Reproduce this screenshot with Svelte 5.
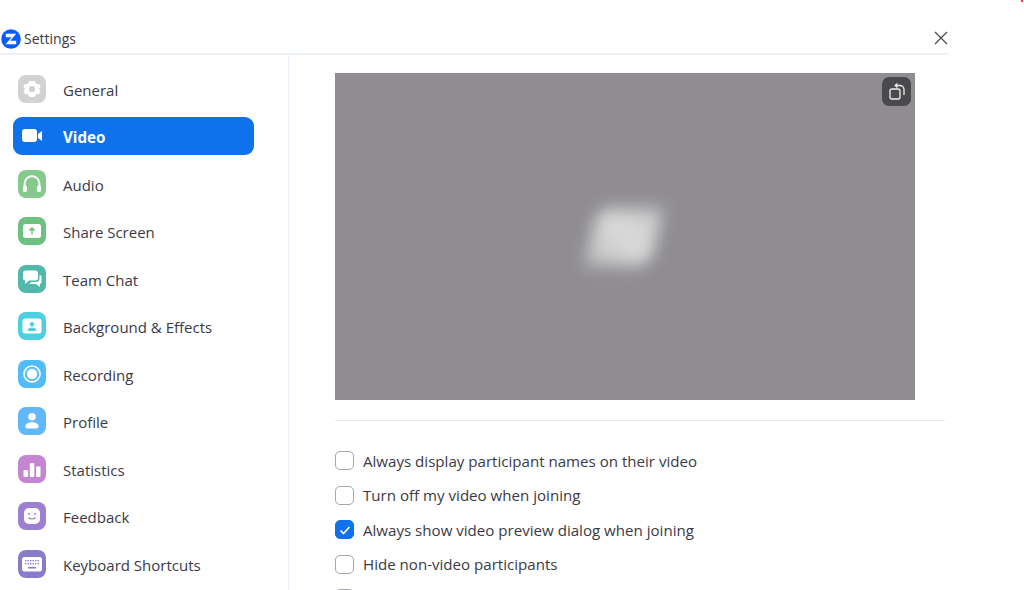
<script>
  const items = [
    { label: 'General', cls: 'general' },
    { label: 'Video', cls: 'video', active: true },
    { label: 'Audio', cls: 'audio' },
    { label: 'Share Screen', cls: 'share' },
    { label: 'Team Chat', cls: 'chat' },
    { label: 'Background & Effects', cls: 'bg' },
    { label: 'Recording', cls: 'rec' },
    { label: 'Profile', cls: 'profile' },
    { label: 'Statistics', cls: 'stats' },
    { label: 'Feedback', cls: 'feedback' },
    { label: 'Keyboard Shortcuts', cls: 'keys' }
  ];
  const options = [
    { label: 'Always display participant names on their video', checked: false },
    { label: 'Turn off my video when joining', checked: false },
    { label: 'Always show video preview dialog when joining', checked: true },
    { label: 'Hide non-video participants', checked: false },
    { label: '', checked: false }
  ];
</script>

<div class="page">
  <span class="speck"></span>
  <header class="titlebar">
    <div class="title">
      <svg class="logo" viewBox="0 0 20 20" width="20" height="20">
        <circle cx="10" cy="10" r="9.8" fill="#0b5cff" />
        <path d="M4.800 4.800h10.400l-6 7h6v3.400H4.600l6-7H4.800z" fill="#fff" />
      </svg>
      <span>Settings</span>
    </div>
    <button class="close" aria-label="Close">
      <svg viewBox="0 0 14 14" width="14" height="14"><path d="M1 1l12 12M13 1L1 13" stroke="#444" stroke-width="1.1" fill="none" /></svg>
    </button>
  </header>

  <div class="body">
    <nav class="sidebar">
      {#each items as item}
        <div class="row" class:active={item.active}>
          {#if item.cls === 'video'}
            <svg class="plain" viewBox="0 0 28 28" width="28" height="28">
              <rect x="4" y="7" width="15" height="13" rx="3" fill="#fff" />
              <path d="M20 12l4-3v10l-4-3z" fill="#fff" />
            </svg>
          {:else}
            <svg class="icon {item.cls}" viewBox="0 0 28 28" width="28" height="28">
              {#if item.cls === 'general'}
                <path fill="#fff" fill-rule="evenodd" d="M11.200 6h5.600l1.300 2.700 3 .2 1.500 2.500L21 14l1.600 2.600-1.500 2.500-3 .2L16.800 22h-5.600l-1.300-2.700-3-.2-1.500-2.500L7 14l-1.600-2.600 1.500-2.500 3-.2zM14 10.900a3.100 3.100 0 1 0 0 6.200 3.100 3.100 0 0 0 0-6.200z" />
              {:else if item.cls === 'audio'}
                <path d="M6.600 17v-3.400a7.400 7.400 0 0 1 14.800 0V17" fill="none" stroke="#fff" stroke-width="2" />
                <rect x="5" y="15.500" width="4" height="6.500" rx="1.600" fill="#fff" />
                <rect x="19" y="15.500" width="4" height="6.500" rx="1.600" fill="#fff" />
              {:else if item.cls === 'share'}
                <rect x="5" y="7" width="18" height="14" rx="2.500" fill="#fff" />
                <path d="M14 17.500v-6M11.400 13.600L14 11l2.600 2.600" fill="none" stroke="#6cc17e" stroke-width="1.500" />
              {:else if item.cls === 'chat'}
                <path d="M7.500 5.500h10a2.500 2.500 0 0 1 2.500 2.500v5a2.500 2.500 0 0 1-2.500 2.500H11L7 19v-3.500a2.500 2.500 0 0 1-2-2.500V8a2.500 2.500 0 0 1 2.500-2.500z" fill="#fff" />
                <path d="M21.500 10a2 2 0 0 1 2 2v5a2 2 0 0 1-1.500 2v3l-4-3h-7l2.500-2h4.500a3.500 3.500 0 0 0 3.500-3.500z" fill="#fff" />
              {:else if item.cls === 'bg'}
                <rect x="4.500" y="6.500" width="19" height="15" rx="2.500" fill="#fff" />
                <circle cx="14" cy="12.300" r="2.200" fill="#4fd0e0" />
                <path d="M9.500 19c0-2.400 2-3.500 4.500-3.500s4.500 1.100 4.500 3.500z" fill="#4fd0e0" />
              {:else if item.cls === 'rec'}
                <circle cx="14" cy="14" r="8" fill="none" stroke="#fff" stroke-width="1.600" />
                <circle cx="14" cy="14" r="5.200" fill="#fff" />
              {:else if item.cls === 'profile'}
                <circle cx="14" cy="9.800" r="3.800" fill="#fff" />
                <path d="M7.500 19.500c0-2.700 2.800-4.200 6.500-4.200s6.500 1.500 6.500 4.200c0 1.200-.8 1.900-2 1.900h-9c-1.200 0-2-.7-2-1.900z" fill="#fff" />
              {:else if item.cls === 'stats'}
                <rect x="5.500" y="15" width="4.500" height="7" rx="1" fill="#fff" />
                <rect x="11.800" y="8" width="4.500" height="14" rx="1" fill="#fff" />
                <rect x="18" y="11.500" width="4.500" height="10.500" rx="1" fill="#fff" />
              {:else if item.cls === 'feedback'}
                <rect x="6" y="6" width="16" height="16" rx="5" fill="#fff" />
                <circle cx="11" cy="12" r="1" fill="#9b7fd0" />
                <circle cx="17" cy="12" r="1" fill="#9b7fd0" />
                <path d="M10.500 15.500c1.800 2 5.200 2 7 0" fill="none" stroke="#9b7fd0" stroke-width="1.200" />
              {:else if item.cls === 'keys'}
                <rect x="4" y="7" width="20" height="14.500" rx="2.500" fill="#fff" />
                {#each [0, 1, 2, 3, 4, 5] as i}
                  <rect x={7 + i * 2.5} y="10" width="1.400" height="1.400" fill="#8a7bcb" />
                  <rect x={7 + i * 2.5} y="13" width="1.400" height="1.400" fill="#8a7bcb" />
                {/each}
                <rect x="10" y="17" width="8" height="1.500" fill="#8a7bcb" />
              {/if}
            </svg>
          {/if}
          <span class="label">{item.label}</span>
        </div>
      {/each}
    </nav>

    <main class="content">
      <div class="preview">
        <div class="glow"></div>
        <button class="rotate" aria-label="Rotate">
          <svg viewBox="0 0 20 20" width="20" height="20" fill="none" stroke="#eee" stroke-width="1.300">
            <rect x="3" y="7" width="10" height="10" rx="2" />
            <path d="M9 3.500h4a4 4 0 0 1 4 4V13" />
            <path d="M10.500 1.500L8.200 3.500l2.300 2" />
          </svg>
        </button>
      </div>
      <hr class="divider" />
      <ul class="options">
        {#each options as opt}
          <li class="option">
            <span class="check" class:on={opt.checked}>
              {#if opt.checked}
                <svg viewBox="0 0 20 20" width="20" height="20"><path d="M5.500 10.500l3 3 6-6.500" fill="none" stroke="#fff" stroke-width="1.700" /></svg>
              {/if}
            </span>
            {#if opt.label}<span class="optlabel">{opt.label}</span>{/if}
          </li>
        {/each}
      </ul>
    </main>
  </div>
</div>

<style>
  :global(body) {
    margin: 0;
    background: #fff;
  }
  .page {
    position: relative;
    width: 1024px;
    height: 590px;
    overflow: hidden;
    background: #fff;
    font-family: "Open Sans", "Noto Sans", sans-serif;
    color: #3a3a46;
  }
  .speck {
    position: absolute;
    top: 0;
    right: 1px;
    width: 2px;
    height: 2px;
    background: #e0404a;
  }
  .titlebar {
    box-sizing: border-box;
    width: 948px;
    height: 55px;
    padding: 29px 0 0 1px;
    border-bottom: 2px solid #edf2f7;
    display: flex;
    justify-content: space-between;
    align-items: flex-start;
  }
  .title {
    display: flex;
    align-items: center;
    gap: 3px;
    font-size: 14px;
    line-height: 20px;
  }
  .logo {
    display: block;
  }
  .close {
    border: 0;
    padding: 0;
    background: none;
    width: 14px;
    height: 14px;
    margin: 2px 0 0 0;
  }
  .close svg {
    display: block;
  }
  .body {
    display: flex;
    height: 535px;
  }
  .sidebar {
    box-sizing: border-box;
    width: 289px;
    flex: none;
    padding-top: 10px;
    border-right: 1px solid #eaf0f8;
    display: grid;
    grid-auto-rows: 47.500px;
    align-content: start;
  }
  .row {
    box-sizing: border-box;
    align-self: center;
    margin-left: 13px;
    width: 241px;
    height: 38px;
    padding-left: 5px;
    display: flex;
    align-items: center;
    gap: 17px;
    border-radius: 9px;
    font-size: 15px;
  }
  .label {
    padding-top: 2px;
  }
  .row.active {
    background: #0e72ed;
    color: #fff;
    font-weight: 700;
    font-size: 15.200px;
  }
  .icon,
  .plain {
    flex: none;
    display: block;
  }
  .icon {
    border-radius: 8px;
  }
  .general { background: #d2d2d2; }
  .audio { background: #85c98b; }
  .share { background: #6cc17e; }
  .chat { background: #52b8a9; }
  .bg { background: #4fd0e0; }
  .rec { background: #50bdf8; }
  .profile { background: #62b8fa; }
  .stats { background: #c485d3; }
  .feedback { background: #9b7fd0; }
  .keys { background: #8a7bcb; }
  .content {
    flex: 1;
    min-width: 0;
    padding: 18px 0 0 46px;
  }
  .preview {
    position: relative;
    width: 580px;
    height: 327px;
    background: #8f8d90;
    overflow: hidden;
  }
  .glow {
    position: absolute;
    left: 256px;
    top: 136px;
    width: 66px;
    height: 56px;
    background: linear-gradient(45deg, #bdbdbe 0%, #dadadb 50%, #d2d2d3 75%, #c4c4c5 100%);
    border-radius: 9px;
    transform: skewX(-14deg);
    filter: blur(8px);
  }
  .rotate {
    position: absolute;
    top: 4px;
    right: 4px;
    width: 29px;
    height: 29px;
    padding: 4px;
    border: 0;
    border-radius: 7px;
    background: #4a4a4c;
  }
  .rotate svg {
    display: block;
    margin: 0 auto;
  }
  .divider {
    width: 610px;
    height: 1px;
    border: 0;
    margin: 20px 0 0;
    background: #e4e9f0;
  }
  .options {
    list-style: none;
    margin: 0;
    padding: 22.700px 0 0;
  }
  .option {
    height: 34.500px;
    display: flex;
    align-items: center;
    gap: 9px;
    font-size: 15.100px;
  }
  .check {
    box-sizing: border-box;
    flex: none;
    width: 19px;
    height: 19px;
    border: 1.500px solid #a7a7ad;
    border-radius: 5px;
    background: #fff;
    display: flex;
    align-items: center;
    justify-content: center;
  }
  .check.on {
    background: #0e72ed;
    border-color: #0e72ed;
  }
  .check svg {
    flex: none;
  }
  .optlabel {
    white-space: nowrap;
  }
</style>
